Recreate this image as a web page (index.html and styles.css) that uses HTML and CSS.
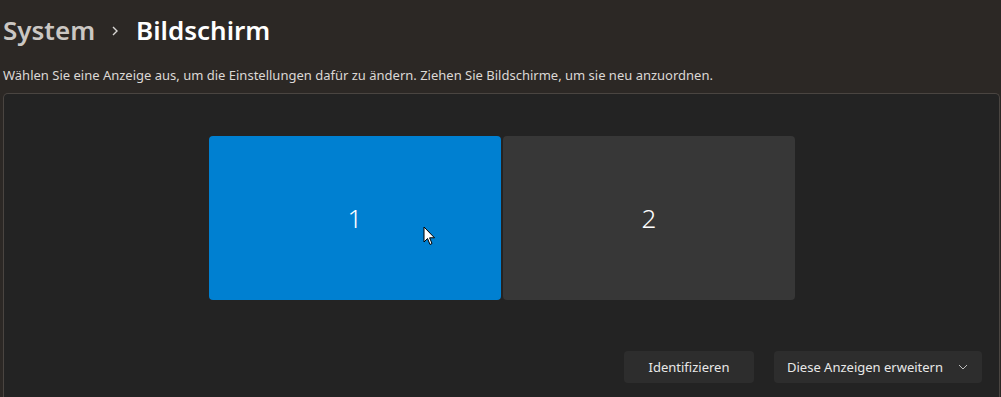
FILE: index.html
```html
<!DOCTYPE html>
<html lang="de">
<head>
  <meta charset="UTF-8">
  <title>Bildschirm</title>
  <link rel="stylesheet" href="styles.css">
</head>
<body>
  <header class="crumbs">
    <span class="crumb-parent">System</span>
    <svg class="crumb-sep" width="10" height="12" viewBox="0 0 10 12"><path d="M3 2 L7 6 L3 10" fill="none" stroke="#d8d6d4" stroke-width="1.4"/></svg>
    <span class="crumb-current">Bildschirm</span>
  </header>
  <p class="hint">Wählen Sie eine Anzeige aus, um die Einstellungen dafür zu ändern. Ziehen Sie Bildschirme, um sie neu anzuordnen.</p>

  <section class="panel">
    <div class="monitors">
      <div class="monitor selected">1
        <svg class="cursor" width="14" height="22" viewBox="0 0 14 22">
          <path d="M1 1 L1 16 L4.5 12.5 L7 18.5 L9 17.5 L6.6 11.8 L11.5 11.8 Z" fill="#fff" stroke="#000" stroke-width="1"/>
        </svg>
      </div>
      <div class="monitor">2</div>
    </div>
    <div class="actions">
      <button class="btn">Identifizieren</button>
      <button class="btn dropdown">Diese Anzeigen erweitern
        <svg width="10" height="6" viewBox="0 0 10 6"><path d="M1 1 L5 5 L9 1" fill="none" stroke="#bdbdbd" stroke-width="1"/></svg>
      </button>
    </div>
  </section>
</body>
</html>
```

FILE: styles.css
```css
body {
  margin: 0;
  background: #2c2825;
  font-family: "Noto Sans", "Open Sans", sans-serif;
  color: #fff;
  height: 397px;
  overflow: hidden;
}
.crumbs {
  display: flex;
  align-items: center;
  padding: 10px 0 0 3px;
  height: 40px;
  font-size: 26px;
  font-weight: 600;
}
.crumb-parent {
  color: #cbc7c3;
}
.crumb-sep {
  margin: 2px 16px 0 15px;
}
.crumb-current {
  color: #ffffff;
}
.hint {
  margin: 16px 0 0 3px;
  font-size: 13px;
  color: #dcd8d5;
}
.panel {
  margin: 9px 0 0 3px;
  background: #232323;
  border: 1px solid #4a4541;
  border-bottom: none;
  border-radius: 5px 5px 0 0;
  height: 310px;
  width: 997px;
  box-sizing: border-box;
}
.monitors {
  display: flex;
  justify-content: center;
  gap: 2px;
  padding: 42px 0 0 1px;
}
.monitor {
  position: relative;
  width: 292px;
  height: 164px;
  background: #373737;
  border-radius: 4px;
  display: flex;
  align-items: center;
  justify-content: center;
  font-size: 26px;
  font-weight: 300;
}
.monitor.selected {
  background: #0080d1;
}
.cursor {
  position: absolute;
  left: 214px;
  top: 90px;
}
.actions {
  display: flex;
  justify-content: flex-end;
  gap: 20px;
  padding: 51px 17px 0 0;
}
.btn {
  height: 32px;
  background: #2d2d2d;
  border: none;
  border-radius: 4px;
  color: #e8e8e8;
  font-family: "Noto Sans", "Open Sans", sans-serif;
  font-size: 13px;
  padding: 0 24px;
}
.btn:first-child {
  width: 130px;
}
.dropdown {
  width: 208px;
  display: flex;
  align-items: center;
  justify-content: space-between;
  padding: 0 14px 0 13px;
}
```
